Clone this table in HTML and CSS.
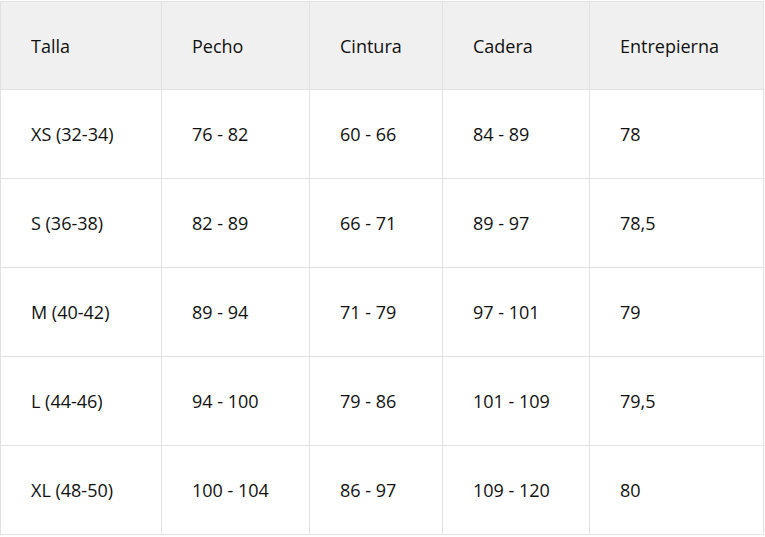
FILE: index.html
```html
<!DOCTYPE html>
<html lang="es">
<head>
<meta charset="utf-8">
<link rel="stylesheet" href="styles.css">
</head>
<body>
<table class="sizes">
  <colgroup>
    <col class="c1"><col class="c2"><col class="c3"><col class="c4"><col class="c5">
  </colgroup>
  <thead>
    <tr><th>Talla</th><th>Pecho</th><th>Cintura</th><th>Cadera</th><th>Entrepierna</th></tr>
  </thead>
  <tbody>
    <tr><td>XS (32-34)</td><td>76 - 82</td><td>60 - 66</td><td>84 - 89</td><td>78</td></tr>
    <tr><td>S (36-38)</td><td>82 - 89</td><td>66 - 71</td><td>89 - 97</td><td>78,5</td></tr>
    <tr><td>M (40-42)</td><td>89 - 94</td><td>71 - 79</td><td>97 - 101</td><td>79</td></tr>
    <tr><td>L (44-46)</td><td>94 - 100</td><td>79 - 86</td><td>101 - 109</td><td>79,5</td></tr>
    <tr><td>XL (48-50)</td><td>100 - 104</td><td>86 - 97</td><td>109 - 120</td><td>80</td></tr>
  </tbody>
</table>
</body>
</html>
```
FILE: styles.css
```css
html, body {
  margin: 0;
  padding: 0;
  background: #ffffff;
}
.sizes {
  border-collapse: collapse;
  table-layout: fixed;
  width: 763px;
  margin-top: 1px;
  font-family: "Open Sans", "Liberation Sans", sans-serif;
  font-size: 18px;
  color: #111111;
}
.c1 { width: 161px; }
.c2 { width: 148px; }
.c3 { width: 133px; }
.c4 { width: 147px; }
.c5 { width: 174px; }
.sizes th,
.sizes td {
  border: 1px solid #e2e2e2;
  height: 89px;
  padding: 0 0 0 30px;
  text-align: left;
  vertical-align: middle;
  font-weight: 400;
  box-sizing: border-box;
}
.sizes thead th {
  height: 88px;
  background: #f0f0f0;
}
```
